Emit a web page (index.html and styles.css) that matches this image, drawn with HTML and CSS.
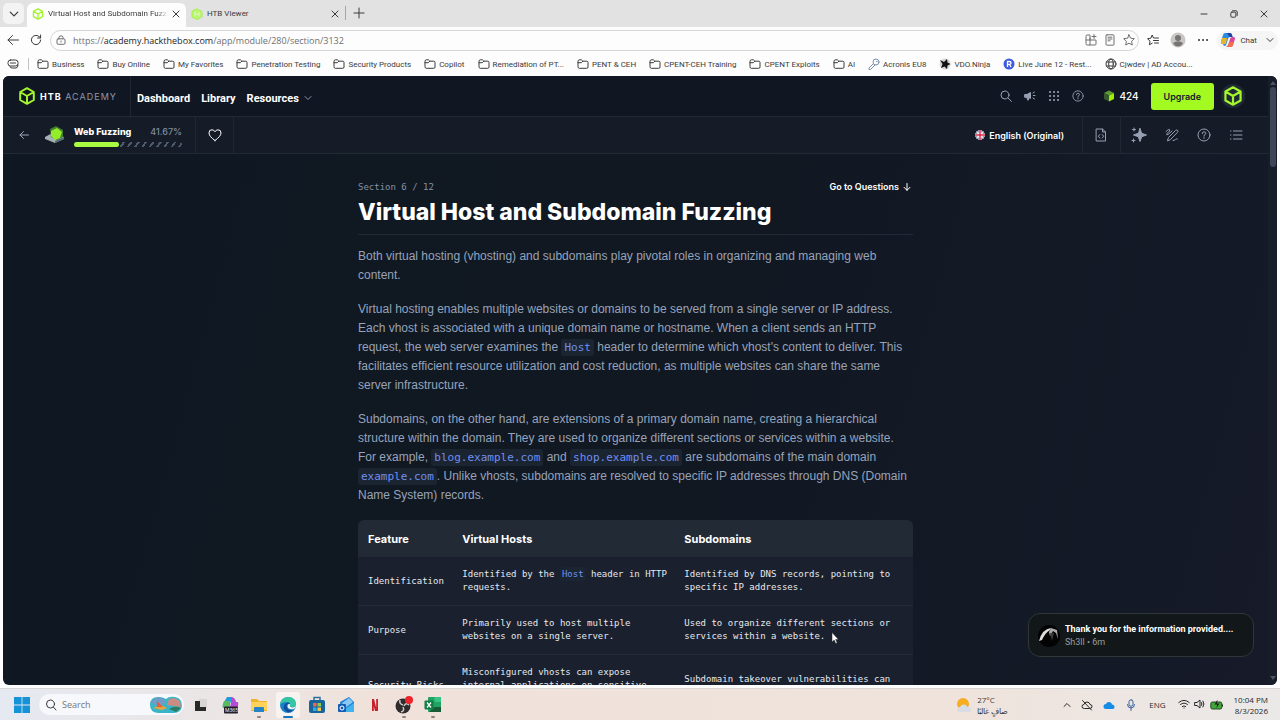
FILE: index.html
```html
<!DOCTYPE html>
<html lang="en">
  <head>
    <meta charset="UTF-8" />
    <meta name="viewport" content="width=device-width, initial-scale=1.0" />
    <title>Virtual Host and Subdomain Fuzzing</title>
    <link rel="stylesheet" href="styles.css">
  </head>
  <body>
    <svg class="sprite" aria-hidden="true">
      <symbol id="folder" viewBox="0 0 12 12"><path d="M1 3.2Q1 1.8 2.4 1.8H4.4L5.8 3.2H9.8Q11 3.2 11 4.4V9Q11 10.3 9.8 10.3H2.3Q1 10.3 1 9ZM1 4.7H4.3L5.8 3.2" /></symbol>
      <symbol id="close" viewBox="0 0 8 8"><path d="M1 1L7 7M7 1L1 7" /></symbol>
      <symbol id="cube" viewBox="0 0 18 18"><path d="M9 1.2L15.8 5V13L9 16.8L2.2 13V5ZM2.2 5L9 9L15.8 5M9 9V16.8" /></symbol>
      <symbol id="down" viewBox="0 0 8 8"><path d="M1 2.5L4 5.5L7 2.5" /></symbol>
      <symbol id="help" viewBox="0 0 14 14"><circle cx="7" cy="7" r="6" /><path d="M5.2 5.6Q5.2 3.8 7 3.8T8.8 5.5Q8.8 6.5 7 7.3V8.2M7 9.6V10.4" /></symbol>
    </svg>

    <!-- Browser chrome -->
    <div class="tabs">
      <button class="tabList" aria-label="Tab list"><svg class="icon s10"><use href="#down" /></svg></button>
      <div class="tab active">
        <svg class="icon s12 lime"><use href="#cube" /></svg>
        <span class="tabTitle">Virtual Host and Subdomain Fuzzing</span>
        <button aria-label="Close tab"><svg class="icon s8"><use href="#close" /></svg></button>
      </div>
      <div class="tab">
        <svg class="icon s12 limeFill" viewBox="0 0 12 12"><path d="M6 1L11 3.5V9L6 11.5L1 9V3.5Z" /><path class="pale" d="M4 4V8M8 4V8M4 6H8" /></svg>
        <span class="tabTitle">HTB Viewer</span>
        <button aria-label="Close tab"><svg class="icon s8"><use href="#close" /></svg></button>
      </div>
      <button class="newTab" aria-label="New tab"><svg class="icon s12" viewBox="0 0 12 12"><path d="M6 1V11M1 6H11" /></svg></button>
      <div class="windowButtons">
        <button aria-label="Minimize"><svg class="icon s8" viewBox="0 0 8 8"><path d="M1 4H7" /></svg></button>
        <button aria-label="Restore"><svg class="icon s8" viewBox="0 0 8 8"><rect x="0.8" y="2.2" width="5" height="5" rx="1" /><path d="M2.5 0.8H6Q7.2 0.8 7.2 2V5.5" /></svg></button>
        <button aria-label="Close"><svg class="icon s8"><use href="#close" /></svg></button>
      </div>
    </div>

    <div class="toolbar">
      <button aria-label="Back"><svg class="icon s12" viewBox="0 0 12 12"><path d="M11.5 6H1M5.5 1.5L1 6L5.5 10.5" /></svg></button>
      <button aria-label="Refresh"><svg class="icon s12" viewBox="0 0 12 12"><path d="M10.6 6A4.6 4.6 0 1 1 9 2.5L10.5 3.8M10.6 1V4H7.6" /></svg></button>
      <div class="address">
        <svg class="icon s10" viewBox="0 0 10 10"><rect x="1" y="3.8" width="8" height="5.5" rx="1.2" /><path d="M3 3.8V2.5Q3 0.8 5 0.8T7 2.5V3.8M5 6V7" /></svg>
        <span class="url">https://<b>academy.hackthebox.com</b>/app/module/280/section/3132</span>
        <svg class="icon s12" viewBox="0 0 12 12"><path d="M1 2Q1 1 2 1H5V11H2Q1 11 1 10ZM1 6H11V10Q11 11 10 11H5M5 6V4M9 0.5V4.5M7 2.5H11" /></svg>
        <svg class="icon s12" viewBox="0 0 12 12"><rect x="2" y="0.8" width="8" height="10.4" rx="1" /><path d="M4 3.2H8M4 5H8M4 6.8H6" /></svg>
        <svg class="icon s12" viewBox="0 0 12 12"><path d="M6 0.8L7.6 4.2L11.3 4.7L8.6 7.3L9.3 11L6 9.2L2.7 11L3.4 7.3L0.7 4.7L4.4 4.2Z" /></svg>
      </div>
      <button aria-label="Favorites"><svg class="icon s12" viewBox="0 0 12 12"><path d="M6.5 4L5.2 1L3.8 4.2L0.6 4.7L3 7.2L2.4 10.8L5.2 9.2M7.5 4H11.5M6.5 6.5H11.5M7.5 9H11.5" /></svg></button>
      <svg class="s16" viewBox="0 0 16 16"><circle cx="8" cy="8" r="7.5" fill="#c9c7c6" /><circle cx="8" cy="6" r="3" fill="#767372" /><path d="M3 11Q8 7.5 13 11Q11 14.5 8 14.5T3 11Z" fill="#767372" /></svg>
      <button aria-label="Settings and more"><svg class="icon s12" viewBox="0 0 12 12"><path class="dots" d="M2 6H2.1M6 6H6.1M10 6H10.1" /></svg></button>
      <button class="chat">
        <svg class="s16" viewBox="0 0 16 16"><path d="M5 1H10Q11.5 1 12 3L12.6 5H10Q8.5 5 8 7L6.5 12Q6 14 4.5 14Q3.5 14 3 12H2.5Q0.5 12 1 9.500L3 3Q3.600 1 5 1Z" fill="#2b8de0" /><path d="M1 9.500L2 6H7L6 12H2.500Q0.500 12 1 9.500Z" fill="#e6b52d" /><path d="M11 15H6Q8 14.500 8.500 12L10 7Q10.500 5 12.500 5H13.500Q15.500 5 15 7L13 13Q12.500 15 11 15Z" fill="#d8459b" /><path d="M9 10H14L13 13Q12.500 15 11 15H6Q8 14.500 9 10Z" fill="#f0704e" /><path d="M7 1H10Q11.500 1 12 3L12.600 5H9.500Z" fill="#273f9e" /></svg>
        Chat
        <svg class="icon s8"><use href="#down" /></svg>
      </button>
    </div>

    <nav class="bookmarks">
      <svg class="icon s12 workspace" viewBox="0 0 12 12"><rect x="1" y="2" width="10" height="6" rx="2.500" /><path d="M3 8.500Q3 10 5 10H9Q11 10 11 7M3.500 5H8.500" /></svg>
      <a href="#"><svg class="icon s12"><use href="#folder" /></svg>Business</a>
      <a href="#"><svg class="icon s12"><use href="#folder" /></svg>Buy Online</a>
      <a href="#"><svg class="icon s12"><use href="#folder" /></svg>My Favorites</a>
      <a href="#"><svg class="icon s12"><use href="#folder" /></svg>Penetration Testing</a>
      <a href="#"><svg class="icon s12"><use href="#folder" /></svg>Security Products</a>
      <a href="#"><svg class="icon s12"><use href="#folder" /></svg>Copilot</a>
      <a href="#"><svg class="icon s12"><use href="#folder" /></svg>Remediation of PT...</a>
      <a href="#"><svg class="icon s12"><use href="#folder" /></svg>PENT &amp; CEH</a>
      <a href="#"><svg class="icon s12"><use href="#folder" /></svg>CPENT-CEH Training</a>
      <a href="#"><svg class="icon s12"><use href="#folder" /></svg>CPENT Exploits</a>
      <a href="#"><svg class="icon s12"><use href="#folder" /></svg>AI</a>
      <a href="#"><svg class="icon s12 steel" viewBox="0 0 12 12"><circle cx="8" cy="4" r="3" /><path d="M5.500 5.500L1 10V11.500H2.500L7 7M8.500 3.500H9" /></svg>Acronis EU8</a>
      <a href="#"><svg class="s12" viewBox="0 0 12 12"><circle cx="6" cy="6" r="5.500" fill="#d5d5d5" /><path d="M1 2L5 4L8 1L8.500 4.500L11.500 6L8.500 7.500L8 11L5.500 8.500L2 10L3.500 6Z" fill="#111" /></svg>VDO.Ninja</a>
      <a href="#"><svg class="s12" viewBox="0 0 12 12"><circle cx="6" cy="6" r="5.500" fill="#3d5bdc" /><path d="M4.500 9V3.500H6.500Q8 3.500 8 5T6.500 6.300H4.500M6.500 6.300L8 9" fill="none" stroke="#fff" stroke-width="1.300" /></svg>Live June 12 - Rest...</a>
      <a href="#"><svg class="icon s12" viewBox="0 0 12 12"><circle cx="6" cy="6" r="5" /><ellipse cx="6" cy="6" rx="2.300" ry="5" /><path d="M1.500 4H10.500M1.500 8H10.500" /></svg>Cjwdev | AD Accou...</a>
    </nav>

    <!-- Academy page -->
    <div class="app">
      <header class="topbar">
        <a class="brand" href="#"><svg class="icon s18 lime"><use href="#cube" /></svg><span><b>HTB</b> ACADEMY</span></a>
        <nav class="menu">
          <a href="#">Dashboard</a>
          <a href="#">Library</a>
          <a href="#">Resources <svg class="icon s8"><use href="#down" /></svg></a>
        </nav>
        <div class="tools">
          <button aria-label="Search"><svg class="icon s12" viewBox="0 0 12 12"><circle cx="5" cy="5" r="4" /><path d="M8 8L11.500 11.500" /></svg></button>
          <button aria-label="News"><svg class="icon s12" viewBox="0 0 12 12"><path class="solid" d="M1 4.500H3L6.500 2.500V8.500L4.500 7.500V10H3.500L3 7.300H1Z" /><path d="M9 3L10.500 2M9.300 5.500H11M9 8L10.500 9" /></svg></button>
          <button aria-label="Apps"><svg class="icon s12" viewBox="0 0 12 12"><path class="dots" d="M2 2H2.100M6 2H6.100M10 2H10.100M2 6H2.100M6 6H6.100M10 6H10.100M2 10H2.100M6 10H6.100M10 10H10.100" /></svg></button>
          <button aria-label="Help"><svg class="icon s12"><use href="#help" /></svg></button>
        </div>
        <div class="cubes">
          <svg class="s12" viewBox="0 0 12 12"><path d="M6 0.500L11 3L6 5.500L1 3Z" fill="#5c9a35" /><path d="M1 3L6 5.500V11.500L1 9Z" fill="#35592c" /><path d="M11 3L6 5.500V11.500L11 9Z" fill="#9fef00" /></svg>
          424
        </div>
        <button class="upgrade">Upgrade</button>
        <button class="avatar" aria-label="Account"><svg class="icon s20 lime"><use href="#cube" /></svg></button>
      </header>

      <div class="modulebar">
        <button class="back" aria-label="Back to module"><svg class="icon s10" viewBox="0 0 10 10"><path d="M9.500 5H1M4.500 1.500L1 5L4.500 8.500" /></svg></button>
        <svg class="s20" viewBox="0 0 20 20"><path d="M0 12L9 7L19 12V14L10 18L0 14Z" fill="#a3b0b4" /><path d="M10 16L19 12V14L10 18Z" fill="#526b6b" /><path d="M5 4L11 1L18 5V12L12 15L6 12Z" fill="#447d30" /><path d="M6 6L12 3L17 7L15 13L10 15L6 11Z" fill="#93ed28" /></svg>
        <div class="module">
          <div class="moduleTitle"><b>Web Fuzzing</b><span>41.67%</span></div>
          <div class="progress"><div class="done" style="width: 41.67%"></div></div>
        </div>
        <button class="like" aria-label="Like"><svg class="icon s14" viewBox="0 0 14 14"><path d="M7 12.500Q1 8.500 1 5T4 1.800Q6 1.800 7 3.800Q8 1.800 10 1.800Q13 1.800 13 5T7 12.500Z" /></svg></button>
        <button class="language">
          <svg class="s10" viewBox="0 0 10 10"><circle cx="5" cy="5" r="5" fill="#38437c" /><path d="M1.500 1.500L8.500 8.500M8.500 1.500L1.500 8.500" stroke="#eee" stroke-width="1.500" /><path d="M5 0V10M0 5H10" stroke="#fff" stroke-width="3" /><path d="M5 0V10M0 5H10" stroke="#d72b45" stroke-width="1.500" /></svg>
          English (Original)
        </button>
        <button class="document" aria-label="Cheat sheet"><svg class="icon s14" viewBox="0 0 14 14"><path d="M2.500 1H8.500L11.500 4V13H2.500ZM8.500 1V4H11.500M5.800 6.500L4.300 8.200L5.800 10M8.200 6.500L9.700 8.200L8.200 10" /></svg></button>
        <div class="actions">
          <button aria-label="Assistant"><svg class="icon s16" viewBox="0 0 16 16"><path class="solid" d="M9 1.500L10.700 6.300L15.500 8L10.700 9.700L9 14.500L7.300 9.700L2.500 8L7.300 6.300Z" /><path d="M3 1V4M1.500 2.500H4.500M2.500 12V15M1 13.500H4" /></svg></button>
          <button aria-label="Notes"><svg class="icon s14" viewBox="0 0 14 14"><path d="M1 3.500Q4 0.500 4.800 1.800Q5 3 2 5.500Q1 7.500 3 6.500L7 3M2.500 12.500L3.500 9.500L10.500 2.500Q12 1.500 12.800 2.500Q13.300 3.300 12.500 4.300L5.500 11.500ZM8 12.500Q9 13 10.500 11.500T12.500 11" /></svg></button>
          <button aria-label="Help"><svg class="icon s14"><use href="#help" /></svg></button>
          <button aria-label="Table of contents"><svg class="icon s14" viewBox="0 0 14 14"><path d="M4.500 3H13M4.500 7H13M4.500 11H13M1.500 3H2M1.500 7H2M1.500 11H2" /></svg></button>
        </div>
      </div>

      <main class="content">
        <article>
          <div class="sectionRow">
            <span class="sectionNo">Section 6 / 12</span>
            <a href="#">Go to Questions <svg class="icon s8" viewBox="0 0 8 8"><path d="M4 0.500V7.300M1 4.300L4 7.300L7 4.300" /></svg></a>
          </div>
          <h1>Virtual Host and Subdomain Fuzzing</h1>
          <p>Both virtual hosting (vhosting) and subdomains play pivotal roles in organizing and managing web content.</p>
          <p>Virtual hosting enables multiple websites or domains to be served from a single server or IP address. Each vhost is associated with a unique domain name or hostname. When a client sends an HTTP request, the web server examines the <code>Host</code> header to determine which vhost's content to deliver. This facilitates efficient resource utilization and cost reduction, as multiple websites can share the same server infrastructure.</p>
          <p>Subdomains, on the other hand, are extensions of a primary domain name, creating a hierarchical structure within the domain. They are used to organize different sections or services within a website. For example, <code>blog.example.com</code> and <code>shop.example.com</code> are subdomains of the main domain <code>example.com</code>. Unlike vhosts, subdomains are resolved to specific IP addresses through DNS (Domain Name System) records.</p>
          <table>
            <thead>
              <tr><th class="feature">Feature</th><th class="hosts">Virtual Hosts</th><th>Subdomains</th></tr>
            </thead>
            <tbody>
              <tr><td>Identification</td><td>Identified by the <code>Host</code> header in HTTP requests.</td><td>Identified by DNS records, pointing to specific IP addresses.</td></tr>
              <tr><td>Purpose</td><td>Primarily used to host multiple websites on a single server.</td><td>Used to organize different sections or services within a website.</td></tr>
              <tr><td>Security Risks</td><td>Misconfigured vhosts can expose internal applications on sensitive data.</td><td>Subdomain takeover vulnerabilities can occur.</td></tr>
            </tbody>
          </table>
        </article>
      </main>

      <div class="scrollbar"><div class="arrow up"></div><div class="thumb"></div><div class="arrow"></div></div>

      <aside class="toast">
        <svg class="s24" viewBox="0 0 24 24"><circle cx="12" cy="12" r="11" fill="#030303" /><path d="M2 17Q5 5 14 4L13 6Q8 9 5 16Z" fill="#ddd" /><path d="M14 4L20 6L21 15L19 9L16 7L13 12L12 8Z" fill="#aaa" /><path d="M13 9L15 17L17 9Z" fill="#3a3a3a" /></svg>
        <div><b>Thank you for the information provided....</b><span>Sh3ll • 6m</span></div>
      </aside>
      <svg class="cursor" viewBox="0 0 8 12"><path d="M1 0.500V10L3.200 8L4.700 11.500L6.200 10.800L4.700 7.500H7.500Z" fill="#fff" stroke="#222" stroke-width="0.500" /></svg>
    </div>

    <!-- Windows taskbar -->
    <footer class="taskbar">
      <button aria-label="Start"><svg class="s16" viewBox="0 0 16 16"><path d="M0 0H7.600V7.600H0ZM8.400 0H16V7.600H8.400ZM0 8.400H7.600V16H0ZM8.400 8.400H16V16H8.400Z" fill="#1593d8" /></svg></button>
      <label class="search">
        <svg class="icon s12" viewBox="0 0 12 12"><circle cx="5.500" cy="5" r="4" /><path d="M8.300 8L11 11" /></svg>
        <input type="text" placeholder="Search" aria-label="Search" />
        <svg class="scene" viewBox="0 0 34 18"><path d="M1 9Q1 1 9 1Q14 1 17 3Q20 0 26 1Q33 2 33 10Q32 17 25 17H9Q1 16 1 9Z" fill="#39b5c7" /><path d="M2 7Q5 1 11 1Q15 3 17 7L10 10Z" fill="#729bc8" /><path d="M18 9L20 3L25 2L31 5L32 11Z" fill="#c98c83" /><path d="M4 12L12 9L18 12L13 14Z" fill="#e6a43d" /><path d="M8 11V5L14 11Z" fill="#e85b3c" /><path d="M20 13Q26 9 32 12L27 16Z" fill="#2b7e64" /></svg>
      </label>
      <div class="pinned">
        <button aria-label="Task view"><svg class="s16" viewBox="0 0 16 16"><path d="M6 2H14V11H6Z" fill="#d8d5d4" /><path d="M2 4H7V10H13V14H2Z" fill="#292929" /></svg></button>
        <button aria-label="Microsoft 365 Copilot"><svg class="s18" viewBox="0 0 18 18"><path d="M6 1H11L8 12H3Q1 12 2 8Z" fill="#249bd8" /><path d="M2 8L3 5H9L8 12H3Q1 12 2 8Z" fill="#58ba62" /><path d="M10 1Q14 1 15 6H17Q18 10 15 15H8L10 7Z" fill="#b44dd0" /><rect x="3" y="10.500" width="14" height="7" rx="1" fill="#24202a" /><text x="4" y="16" font-size="5" fill="#fff">M365</text></svg></button>
        <button class="running" aria-label="File Explorer"><svg class="s18" viewBox="0 0 18 18"><path d="M1 3H7L9 5H17V15H1Z" fill="#efb42b" /><path d="M1 6H17V14H1Z" fill="#ffd35b" /><path d="M5 11H13Q14 11 14 12V16H4V12Q4 11 5 11Z" fill="#2584c8" /></svg></button>
        <button class="running current" aria-label="Edge"><svg class="s18" viewBox="0 0 18 18"><circle cx="9" cy="9" r="8" fill="#1680cb" /><path d="M1 9Q2 1 10 1Q17 2 17 8Q17 11 13 11Q10 11 11 9Q11 6 7 6Q3 6 1 9Z" fill="#37c7a0" /><path d="M6 8Q3 12 7 15Q10 18 14 14Q8 15 7.500 10Q8 7 11 8Q10 5 6 8Z" fill="#124c9b" /><path d="M8.500 10Q8.500 7.500 11 8Q10 11 13 11.500Q16 11.500 17 9Q17 12 14.500 13Q9 14 8.500 10Z" fill="#eef3f4" /></svg></button>
        <button aria-label="Store"><svg class="s18" viewBox="0 0 18 18"><path d="M6 4V1.500H12V4" fill="none" stroke="#2c719d" stroke-width="1.500" /><rect x="1" y="4" width="16" height="13" rx="2" fill="#17649d" /><path d="M5 7H8.500V10.500H5Z" fill="#ef654d" /><path d="M9.500 7H13V10.500H9.500Z" fill="#8acb50" /><path d="M5 11.500H8.500V15H5Z" fill="#36a9e0" /><path d="M9.500 11.500H13V15H9.500Z" fill="#f6c447" /></svg></button>
        <button aria-label="Outlook"><svg class="s18" viewBox="0 0 18 18"><path d="M3 6L12 1L17 6V15Q17 16 15 16H4Z" fill="#207fd5" /><path d="M5 7L12 2L16 6L8 12Z" fill="#86c9f3" /><path d="M5 15L17 7V16H5Z" fill="#42b3ec" /><rect x="1" y="8" width="8" height="8" rx="1" fill="#145db5" /><circle cx="5" cy="12" r="2" fill="none" stroke="#fff" /></svg></button>
        <button aria-label="Netflix"><svg class="s18" viewBox="0 0 18 18"><path d="M6 3H8L11 15H9ZM6 3H7.800V15H6ZM10.200 3H12V15H10.200Z" fill="#c8202e" /></svg></button>
        <button class="running" aria-label="OBS Studio"><svg class="s20" viewBox="0 0 20 20"><circle cx="9" cy="11" r="7.500" fill="#302c2d" /><path d="M9 10Q5 9 6 5M10 11Q12 7 15 10M9 12Q11 16 7 17" fill="none" stroke="#ccc" stroke-width="1.500" /><circle cx="15" cy="5" r="4" fill="#ef242b" /></svg></button>
        <button class="running" aria-label="Excel"><svg class="s18" viewBox="0 0 18 18"><rect x="4" y="1" width="13" height="15" rx="1" fill="#21a366" /><path d="M10.500 1H17V6H10.500Z" fill="#35c481" /><path d="M10.500 11H17V16H5Z" fill="#185c37" /><rect x="0.500" y="4.500" width="9" height="9" rx="1" fill="#107c41" /><path d="M3 6.500L7 11.500M7 6.500L3 11.500" stroke="#fff" stroke-width="1.300" /></svg></button>
      </div>
      <div class="weather">
        <svg class="s18" viewBox="0 0 18 18"><circle cx="8" cy="8" r="6" fill="#f5ad22" /><path d="M5 16Q2 16 2 13.500T5 11Q6 8 9.500 8.500Q12 9 12.500 11Q16 11 16 13.500T13.500 16Z" fill="#d7dce5" /></svg>
        <div><span>27°C</span><span lang="ar" dir="rtl">صافٍ غالبًا</span></div>
      </div>
      <div class="tray">
        <svg class="icon s8" viewBox="0 0 8 8"><path d="M1 5.500L4 2.500L7 5.500" /></svg>
        <svg class="icon s12" viewBox="0 0 12 12"><path d="M3 9.500Q1 9.500 1 7.500T3 5.500Q3.500 3 6 3T9 5.500Q11 5.500 11 7.500T9 9.500ZM1.500 1.500L10.500 11" /></svg>
        <svg class="s12" viewBox="0 0 12 12"><path d="M3 10Q0.500 10 0.500 7.500T3 5Q4 2.500 6.500 3T9 5.500Q11.500 5.500 11.500 8T9 10Z" fill="#158ce6" /></svg>
        <svg class="icon s12 mic" viewBox="0 0 12 12"><rect x="4" y="0.800" width="4" height="6.500" rx="2" /><path d="M2.500 5.500Q2.500 9 6 9T9.500 5.500M6 9V11.500" /></svg>
        <span class="lang">ENG</span>
        <div class="status">
          <svg class="icon s12" viewBox="0 0 12 12"><path d="M0.800 4.500Q6 0 11.200 4.500M2.500 6.500Q6 3.500 9.500 6.500M4.300 8.500Q6 7 7.700 8.500M6 10H6.100" /></svg>
          <svg class="icon s12" viewBox="0 0 12 12"><path d="M1 4.500H3L6 2V10L3 7.500H1ZM7.500 4.500Q8.500 6 7.500 7.500M9 3Q11 6 9 9" /></svg>
          <svg class="s14" viewBox="0 0 14 12"><rect x="0.800" y="3" width="11" height="7" rx="1.500" fill="#3fa737" stroke="#284426" /><path d="M12.500 5.500V7.500" stroke="#222" /><path d="M7.500 0.500L4.500 5.500H7L6.500 9L9.500 4.500H7Z" fill="#222" /></svg>
        </div>
        <div class="clock"><span>10:04 PM</span><span>8/3/2026</span></div>
      </div>
    </footer>
  </body>
</html>
```

FILE: styles.css
```css
* {
  box-sizing: border-box;
}

body {
  display: flex;
  flex-direction: column;
  height: 100vh;
  margin: 0;
  overflow: hidden;
  background: #fdfdfd;
  color: #3b3b3b;
  font-family: "Open Sans", "Noto Sans", sans-serif;
  font-size: 8px;
}

a {
  color: inherit;
  text-decoration: none;
}

button {
  display: flex;
  align-items: center;
  justify-content: center;
  padding: 0;
  border: 0;
  background: none;
  color: inherit;
  font: inherit;
}

svg {
  display: block;
  flex: none;
}

.sprite {
  display: none;
}

/* Icons */
.icon {
  fill: none;
  stroke: currentColor;
  stroke-linecap: round;
  stroke-linejoin: round;
}

.dots {
  stroke-width: 2;
}

.solid {
  fill: currentColor;
}

.lime {
  color: #a3f52c;
  stroke-width: 2;
}

.limeFill {
  color: #a5f04b;
  fill: #b9f56e;
}

.pale {
  stroke: #e0f6c4;
}

.steel {
  color: #7d90ac;
}

.s8 { width: 8px; height: 8px; }
.s10 { width: 10px; height: 10px; }
.s12 { width: 12px; height: 12px; }
.s14 { width: 14px; height: 14px; }
.s16 { width: 16px; height: 16px; }
.s18 { width: 18px; height: 18px; }
.s20 { width: 20px; height: 20px; }
.s24 { width: 24px; height: 24px; }

/* Browser chrome */
.tabs,
.chat,
.bookmarks {
  font-family: Roboto, sans-serif;
}

.tabs {
  display: flex;
  flex: none;
  height: 27px;
  padding: 3px 12px 0 3px;
  background: #e2e2e2;
}

.tabList {
  width: 21px;
  height: 21px;
  margin-right: 3px;
  border-radius: 5px;
  background: #f3f3f3;
}

.tab {
  display: flex;
  align-items: center;
  gap: 4px;
  width: 159px;
  padding: 0 6px 3px 5px;
}

.tab.active {
  border-radius: 6px 6px 0 0;
  background: #fdfdfd;
}

.tabTitle {
  flex: 1;
  overflow: hidden;
  white-space: nowrap;
}

.tab.active .tabTitle {
  mask-image: linear-gradient(90deg, #000 90%, transparent);
}

.newTab {
  height: 14px;
  margin-top: 3px;
  padding-left: 7px;
  border-left: 1px solid #a5a5a5;
}

.windowButtons {
  display: flex;
  gap: 22px;
  height: 21px;
  margin-left: auto;
}

.toolbar {
  display: flex;
  flex: none;
  align-items: center;
  gap: 11px;
  height: 26px;
  padding: 0 2px 0 7px;
}

.address {
  display: flex;
  flex: 1;
  align-items: center;
  gap: 7px;
  height: 21px;
  margin: 0 -3px 0 -3px;
  padding: 0 3px 0 5px;
  border: 1px solid #d5d5d5;
  border-radius: 11px;
  color: #707070;
}

.url {
  flex: 1;
  font-size: 9px;
}

.url b {
  color: #252525;
  font-weight: 400;
}

.chat {
  gap: 4px;
  height: 19px;
  margin-left: -3px;
  padding: 0 4px 0 3px;
  border-radius: 10px;
  background: #f5f5f5;
}

.chat .s8 {
  margin-left: 5px;
}

.bookmarks {
  display: flex;
  flex: none;
  align-items: center;
  gap: 13px;
  height: 22px;
  padding: 0 7px;
  white-space: nowrap;
}

.bookmarks a {
  display: flex;
  align-items: center;
  gap: 3px;
}

.workspace {
  width: 22px;
  margin-right: -5px;
  padding-right: 9px;
  border-right: 1px solid #c4c4c4;
}

/* Academy page */
.app {
  position: relative;
  display: flex;
  flex: 1;
  flex-direction: column;
  min-height: 0;
  margin: 1px 3px 3px;
  overflow: hidden;
  border-radius: 6px;
  background: linear-gradient(105deg, #0f1822 0%, #111822 55%, #161a29 100%);
  color: #fff;
  font-family: Inter, sans-serif;
}

.topbar,
.modulebar {
  display: flex;
  flex: none;
  align-items: center;
  padding-right: 23px;
  margin-right: 9px;
  border-bottom: 1px solid #222a36;
}

.topbar {
  height: 41px;
  background: #111722;
}

.modulebar {
  height: 37px;
  padding-right: 25px;
  background: #151b27;
}

.brand {
  display: flex;
  align-items: center;
  align-self: stretch;
  gap: 4px;
  padding: 0 13px 0 15px;
  border-right: 1px solid #202733;
  color: #8d96aa;
  font-size: 9px;
  letter-spacing: 1px;
}

.brand b {
  color: #fff;
}

.menu {
  display: flex;
  gap: 11px;
  padding: 4px 0 0 6px;
  font-family: Roboto, sans-serif;
  font-size: 11px;
  font-weight: 700;
}

.menu a {
  display: flex;
  align-items: center;
}

.menu svg {
  margin-left: 5px;
  color: #8b93a5;
}

.tools {
  display: flex;
  gap: 12px;
  margin-left: auto;
  color: #98a1b3;
}

.cubes {
  display: flex;
  align-items: center;
  gap: 4px;
  margin: 0 12px 0 19px;
  font-size: 10px;
  font-weight: 500;
}

.upgrade {
  height: 27px;
  padding: 0 13px;
  border-radius: 3px;
  background: #a3fa20;
  color: #15202c;
  font-size: 9px;
  font-weight: 600;
}

.avatar {
  width: 24px;
  height: 24px;
  margin-left: 7px;
  border-radius: 50%;
  background: #202936;
}

.back {
  padding: 0 16px;
  color: #9da6b8;
}

.module {
  width: 108px;
  margin: 2px 13px 0 9px;
}

.moduleTitle {
  display: flex;
  justify-content: space-between;
  margin-bottom: 4px;
  font-size: 9px;
  line-height: 13px;
}

.moduleTitle b {
  font-weight: 800;
}

.moduleTitle span {
  color: #7e899d;
  font-weight: 500;
}

.progress {
  height: 5px;
  border-radius: 3px;
  background: repeating-linear-gradient(125deg, #151b27 0 4px, #4d586a 4px 6px);
}

.done {
  height: 100%;
  border-radius: 3px;
  background: #a8fb41;
}

.like {
  align-self: stretch;
  padding: 0 11px 0 12px;
  border: solid #202733;
  border-width: 0 1px;
}

.language {
  gap: 4px;
  margin-left: auto;
  padding-right: 18px;
  font-size: 9px;
  font-weight: 600;
}

.document {
  align-self: stretch;
  padding: 0 12px 0 11px;
  border: solid #202733;
  border-width: 0 1px;
  color: #98a1b3;
}

.actions {
  display: flex;
  align-items: center;
  gap: 18px;
  padding-left: 10px;
  color: #98a1b3;
}

.content {
  flex: 1;
  min-height: 0;
  margin-right: 9px;
  overflow: hidden;
}

article {
  max-width: 555px;
  margin: 0 auto;
  padding-top: 26px;
}

.sectionRow {
  display: flex;
  justify-content: space-between;
  padding-right: 2px;
  font-size: 9px;
  line-height: 14px;
}

.sectionNo {
  color: #8592a8;
  font-family: "DejaVu Sans Mono", monospace;
}

.sectionRow a {
  display: flex;
  align-items: center;
  gap: 4px;
  font-weight: 600;
}

h1 {
  margin: 4px 0 12px;
  padding-bottom: 8px;
  border-bottom: 1px solid #222936;
  font-size: 23px;
  font-weight: 800;
  line-height: 28px;
}

p {
  margin: 0 0 15px;
  color: #97a3bb;
  font-family: "Liberation Sans", sans-serif;
  font-size: 12px;
  line-height: 19px;
}

code {
  padding: 2px 3px;
  border-radius: 2px;
  background: #1b2532;
  color: #718ff0;
  font-family: "DejaVu Sans Mono", monospace;
  font-size: 11px;
  line-height: 13px;
}

table {
  width: 100%;
  border-radius: 6px;
  border-collapse: collapse;
  overflow: hidden;
  background: #1a202e;
  table-layout: fixed;
  text-align: left;
}

th {
  height: 37px;
  padding: 0 10px;
  background: #222a36;
  font-size: 11px;
  font-weight: 700;
}

.feature {
  width: 17%;
}

.hosts {
  width: 40%;
}

td {
  padding: 11px 4px 11px 10px;
  border-bottom: 1px solid #232a38;
  color: #e6e9ef;
  font-family: "DejaVu Sans Mono", monospace;
  font-size: 9px;
  line-height: 13px;
}

td code {
  padding: 2px;
  font-size: 9px;
}

.scrollbar {
  position: absolute;
  top: 0;
  right: 0;
  bottom: 0;
  display: flex;
  flex-direction: column;
  align-items: center;
  width: 9px;
  padding: 5px 0;
  background: #171d29;
}

.thumb {
  width: 6px;
  height: 80px;
  margin: 2px 0 auto;
  border-radius: 3px;
  background: #3d4656;
}

.arrow {
  border: 3px solid transparent;
  border-top: 4px solid #4b5565;
  border-bottom: 0;
}

.arrow.up {
  border-top: 0;
  border-bottom: 4px solid #4b5565;
}

.toast {
  position: absolute;
  right: 23px;
  bottom: 28px;
  display: flex;
  align-items: center;
  gap: 4px;
  width: 226px;
  height: 44px;
  padding: 2px 8px 0;
  border: 1px solid #303736;
  border-radius: 12px;
  background: #121719;
  font-family: Roboto, sans-serif;
  white-space: nowrap;
}

.toast b,
.toast span {
  display: block;
  font-size: 9px;
  font-weight: 700;
  line-height: 13px;
}

.toast span {
  color: #999e9f;
  font-weight: 400;
}

.cursor {
  position: absolute;
  top: 556px;
  left: 828px;
  width: 8px;
  height: 12px;
}

/* Windows taskbar */
.taskbar {
  display: flex;
  flex: none;
  align-items: center;
  height: 32px;
  padding: 0 12px 0 14px;
  border-top: 1px solid #d8d5d5;
  background: linear-gradient(90deg, #e5e9f1 0%, #eae6e7 14%, #f0e2da 30%, #efe3dc 75%, #ebe9e8 100%);
}

.search {
  display: flex;
  align-items: center;
  gap: 5px;
  width: 145px;
  height: 21px;
  margin-left: 9px;
  padding: 0 1px 0 6px;
  border-radius: 11px;
  background: #f6f8fc;
}

.search input {
  flex: 1;
  min-width: 0;
  padding: 0;
  border: 0;
  background: none;
  color: #666;
  font: inherit;
  font-size: 9px;
}

.scene {
  width: 34px;
  height: 18px;
}

.pinned {
  display: flex;
  gap: 5px;
  margin-left: 5px;
}

.pinned button {
  position: relative;
  width: 24px;
  height: 26px;
  border-radius: 3px;
}

.pinned .current {
  background: #f8f3f0;
}

.running::after {
  position: absolute;
  bottom: 0;
  width: 4px;
  height: 2px;
  border-radius: 1px;
  background: #8b8582;
  content: "";
}

.current::after {
  width: 10px;
  background: #1676bd;
}

.weather {
  display: flex;
  align-items: center;
  gap: 4px;
  margin-left: auto;
}

.weather span,
.clock span {
  display: block;
  line-height: 11px;
}

.tray {
  display: flex;
  align-items: center;
  gap: 10px;
  margin-left: 55px;
  color: #282828;
}

.mic {
  color: #38609d;
}

.lang {
  margin: 0 2px;
}

.status {
  display: flex;
  gap: 4px;
}

.clock {
  text-align: right;
}
```
